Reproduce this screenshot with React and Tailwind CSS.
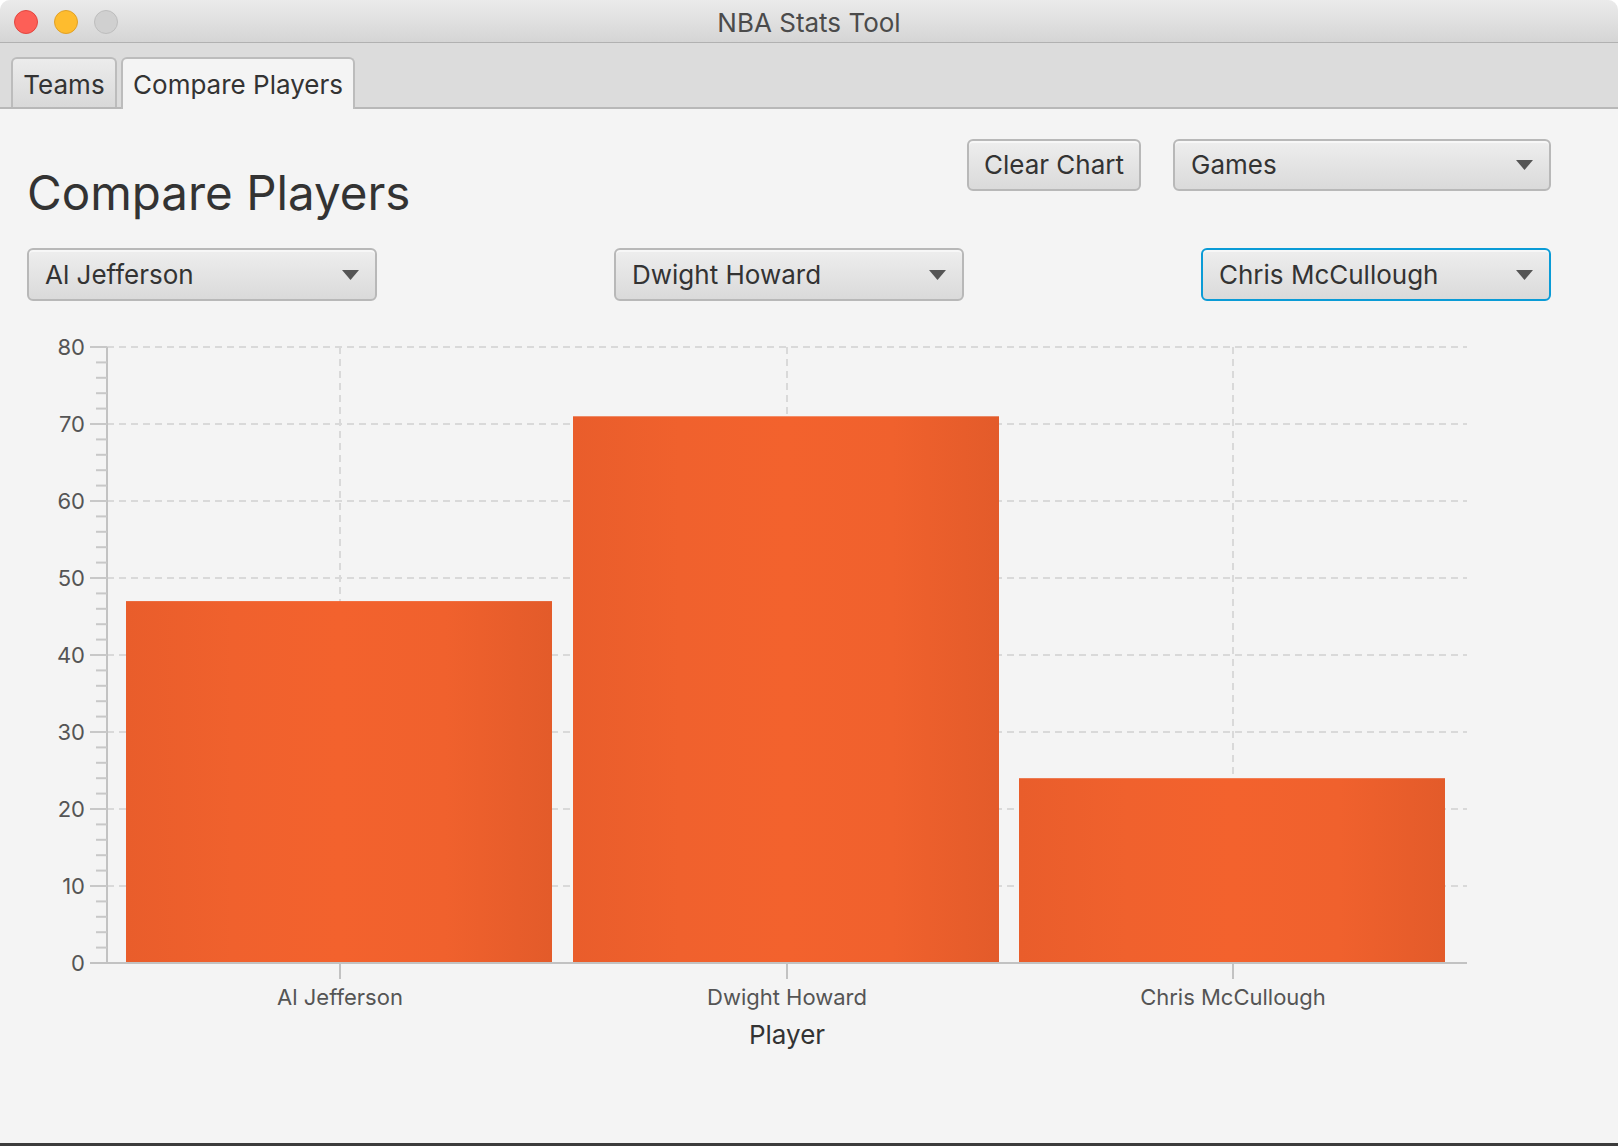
import { useState } from 'react'

const players = [
  { name: 'Al Jefferson', games: 47 },
  { name: 'Dwight Howard', games: 71 },
  { name: 'Chris McCullough', games: 24 },
]

// chart geometry, in page pixels (the svg viewBox starts at page y=320)
const Y0 = 963
const UNIT = 7.7
const LEFT = 107
const RIGHT = 1467
const CATS = [340, 787, 1233]
const BAR_W = 426

function Arrow() {
  return (
    <svg width="17" height="10" viewBox="0 0 17 10">
      <polygon points="0,0 17,0 8.5,10" fill="#555555" />
    </svg>
  )
}

function Combo({ value, width = 'w-[350px]', focused }) {
  return (
    <div
      className={`flex items-center justify-between h-[53px] ${width} pl-[16px] pr-[16px] rounded-[6px] border-2 bg-[linear-gradient(to_bottom,#eeeeee,#dadada)] shadow-[inset_0_2px_0_rgba(255,255,255,0.55)] ${
        focused
          ? 'border-[#0a9bd6] shadow-[0_0_0_2px_rgba(3,158,211,0.18)]'
          : 'border-[#b8b8b8]'
      }`}
    >
      <span className="text-[26px] leading-none text-[#333333]">{value}</span>
      <Arrow />
    </div>
  )
}

function Chart() {
  const ticks = []
  for (let v = 0; v <= 80; v += 2) ticks.push(v)

  return (
    <svg width="1618" height="740" viewBox="0 320 1618 740" className="block">
      <defs>
        <linearGradient id="bar" x1="0" x2="1" y1="0" y2="0">
          <stop offset="0" stopColor="#e95d2b" />
          <stop offset="0.25" stopColor="#f0612d" />
          <stop offset="0.5" stopColor="#f3622d" />
          <stop offset="0.75" stopColor="#f0612d" />
          <stop offset="1" stopColor="#e35b2a" />
        </linearGradient>
      </defs>

      {/* grid */}
      {ticks
        .filter((v) => v > 0 && v % 10 === 0)
        .map((v) => (
          <line
            key={'h' + v}
            x1={LEFT}
            x2={RIGHT}
            y1={Y0 - v * UNIT}
            y2={Y0 - v * UNIT}
            stroke="#d9d9d9"
            strokeWidth="2"
            strokeDasharray="7 5"
          />
        ))}
      {CATS.map((x) => (
        <line
          key={'v' + x}
          x1={x}
          x2={x}
          y1={Y0 - 80 * UNIT}
          y2={Y0}
          stroke="#d9d9d9"
          strokeWidth="2"
          strokeDasharray="7 5"
        />
      ))}

      {/* bars */}
      {players.map((p, i) => (
        <rect
          key={p.name}
          x={CATS[i] - BAR_W / 2 - 1}
          y={Y0 - p.games * UNIT}
          width={BAR_W}
          height={p.games * UNIT - 1}
          fill="url(#bar)"
        />
      ))}

      {/* y axis */}
      <line x1={LEFT} x2={LEFT} y1={Y0 - 80 * UNIT} y2={Y0} stroke="#c2c2c2" strokeWidth="2" />
      {ticks.map((v) => {
        const y = Y0 - v * UNIT
        const major = v % 10 === 0
        return (
          <g key={'t' + v}>
            <line x1={major ? 90 : 96} x2={LEFT} y1={y} y2={y} stroke="#c8c8c8" strokeWidth="2" />
            {major && (
              <text x="85" y={y + 8} textAnchor="end" fontSize="22" fill="#555555">
                {v}
              </text>
            )}
          </g>
        )
      })}

      {/* x axis */}
      <line x1={90} x2={RIGHT} y1={Y0} y2={Y0} stroke="#c2c2c2" strokeWidth="2" />
      {players.map((p, i) => (
        <g key={'c' + p.name}>
          <line x1={CATS[i]} x2={CATS[i]} y1={Y0} y2={Y0 + 16} stroke="#c2c2c2" strokeWidth="2" />
          <text x={CATS[i]} y="1005" textAnchor="middle" fontSize="22" fill="#555555">
            {p.name}
          </text>
        </g>
      ))}
      <text x="787" y="1044" textAnchor="middle" fontSize="26" fill="#333333">
        Player
      </text>
    </svg>
  )
}

export default function App() {
  const [tab, setTab] = useState('compare')

  return (
    <div className="w-[1618px] h-[1146px] flex flex-col bg-[#f4f4f4] border-b-[3px] border-[#3c3c3c] rounded-t-[10px] overflow-hidden font-['Inter','Liberation_Sans',sans-serif]">
      {/* title bar */}
      <div className="h-[43px] shrink-0 grid grid-cols-[1fr_auto_1fr] items-center border-b border-[#b1b1b1] bg-[linear-gradient(to_bottom,#ebebeb,#d5d5d5)]">
        <div className="flex items-center gap-[16px] pl-[14px] pt-[1px]">
          <span className="w-[24px] h-[24px] rounded-full bg-[#fd5f57] border border-[#e2463f]" />
          <span className="w-[24px] h-[24px] rounded-full bg-[#febc2e] border border-[#e0a027]" />
          <span className="w-[24px] h-[24px] rounded-full bg-[#d0d0d0] border border-[#bdbdbd]" />
        </div>
        <div className="text-[26px] leading-none text-[#4b4b4b] pt-[3px]">NBA Stats Tool</div>
        <div />
      </div>

      {/* tabs */}
      <div className="h-[66px] shrink-0 flex items-end gap-[4px] pl-[11px] bg-[#dcdcdc] border-b-2 border-[#b8b8b8]">
        <button
          onClick={() => setTab('teams')}
          className={`w-[106px] flex items-center justify-center rounded-t-[6px] border-2 border-b-0 border-[#bcbcbc] text-[26px] leading-none text-[#333333] pt-[4px] ${
            tab === 'teams'
              ? 'bg-[#f4f4f4] h-[52px] -mb-[2px]'
              : 'h-[50px] bg-[linear-gradient(to_bottom,#ececec,#d9d9d9)]'
          }`}
        >
          Teams
        </button>
        <button
          onClick={() => setTab('compare')}
          className={`w-[234px] flex items-center justify-center rounded-t-[6px] border-2 border-b-0 border-[#bcbcbc] text-[26px] leading-none text-[#333333] pt-[2px] ${
            tab === 'compare'
              ? 'bg-[#f4f4f4] h-[52px] -mb-[2px]'
              : 'h-[50px] bg-[linear-gradient(to_bottom,#ececec,#d9d9d9)]'
          }`}
        >
          Compare Players
        </button>
      </div>

      {/* content */}
      <div className="flex-1 flex flex-col pt-[30px]">
        <div className="flex justify-between items-start pl-[27px] pr-[67px]">
          <h1 className="mt-[30px] text-[47.5px] leading-[48px] font-normal text-[#333333]">
            Compare Players
          </h1>
          <div className="flex gap-[32px]">
            <button className="h-[52px] w-[174px] rounded-[6px] border-2 border-[#b8b8b8] bg-[linear-gradient(to_bottom,#eeeeee,#dadada)] shadow-[inset_0_2px_0_rgba(255,255,255,0.55)] text-[26px] leading-none text-[#333333]">
              Clear Chart
            </button>
            <Combo value="Games" width="w-[378px] !h-[52px]" />
          </div>
        </div>

        <div className="mt-[31px] flex justify-between pl-[27px] pr-[67px]">
          <Combo value="Al Jefferson" />
          <Combo value="Dwight Howard" />
          <Combo value="Chris McCullough" focused />
        </div>

        <div className="mt-[19px]">
          <Chart />
        </div>
      </div>
    </div>
  )
}
